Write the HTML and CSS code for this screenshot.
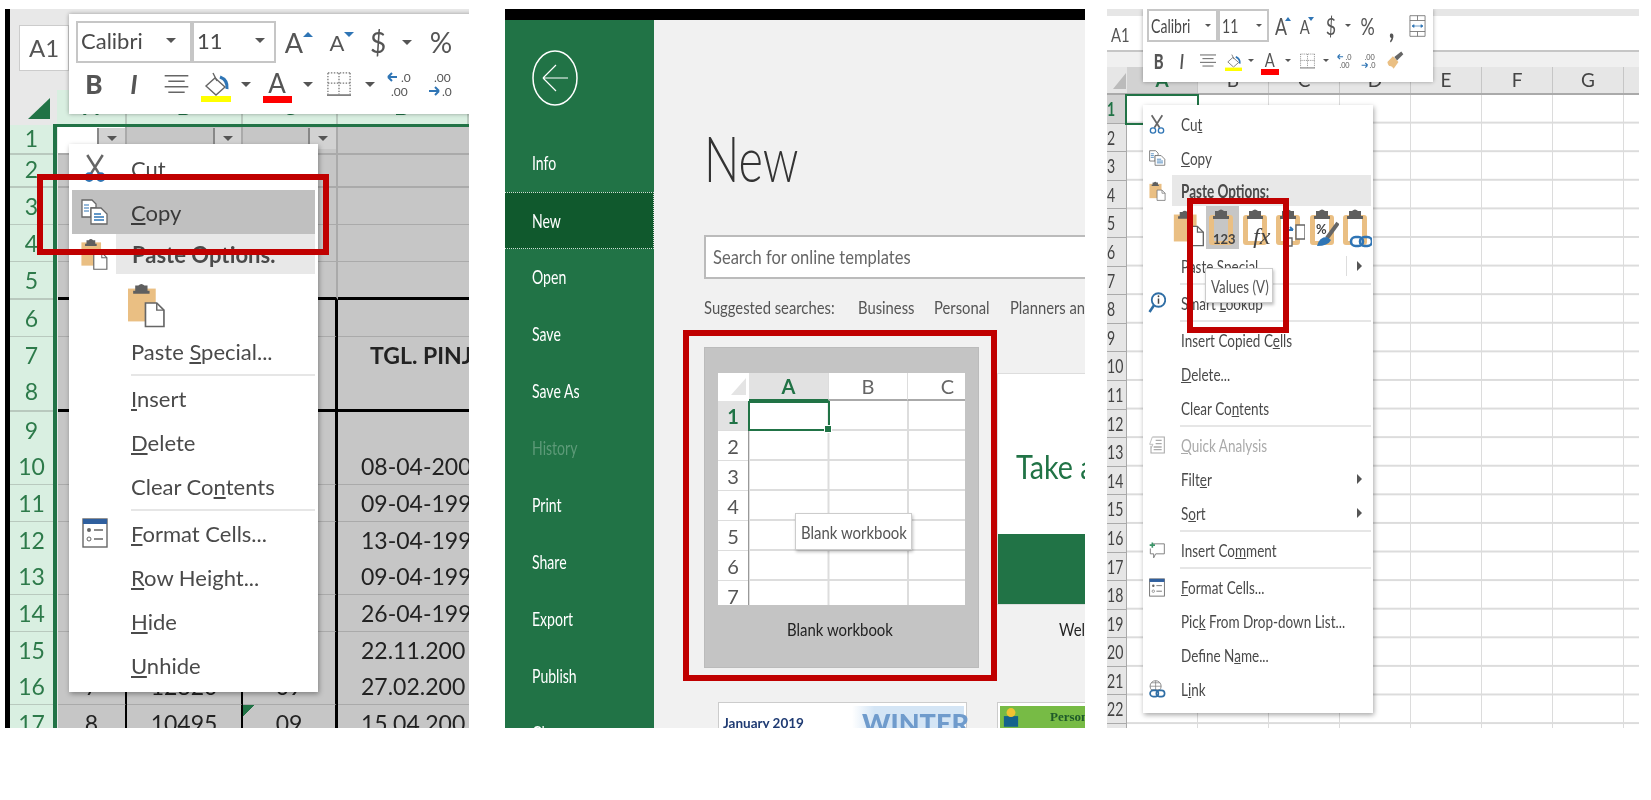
FILE: index.html
```html
<!DOCTYPE html>
<html lang="en">
<head>
    <meta charset="UTF-8">
    <title>Excel copy, new workbook, paste values</title>
    <link rel="stylesheet" href="styles.css">
</head>
<body>
    <svg class="defs" aria-hidden="true">
        <symbol id="i-cut" viewBox="0 0 24 30"><path d="M4 1l12 19M20 1L8 20" stroke="#666" stroke-width="2.6" fill="none"/><circle cx="6" cy="24" r="4" fill="none" stroke="#2f75b5" stroke-width="2"/><circle cx="18" cy="24" r="4" fill="none" stroke="#2f75b5" stroke-width="2"/></symbol>
        <symbol id="i-copy" viewBox="0 0 28 26"><path d="M1 1h10l4 4v4h-5v9H1z" fill="#fff" stroke="#666" stroke-width="1.3"/><path d="M3 6h5M3 9h5M3 12h5" stroke="#2f75b5" stroke-width="1.2"/><path d="M10 9h10l6 6v10H10z" fill="#fff" stroke="#666" stroke-width="1.3"/><path d="M13 15h7M13 18h10M13 21h10" stroke="#2f75b5" stroke-width="1.3"/></symbol>
        <symbol id="i-paste" viewBox="0 0 38 44"><path d="M1 6h27v32H1z" fill="#eabf83"/><path d="M8 8V3h3q3-3 6 0h3v5h2v3H6V8z" fill="#5f5f5f"/><path d="M18 20h11l7 7v16H18z" fill="#fff" stroke="#666" stroke-width="1.6"/><path d="M29 20v7h7" fill="none" stroke="#666" stroke-width="1.4"/></symbol>
        <symbol id="i-clip" viewBox="0 0 32 40"><path fill-rule="evenodd" d="M6 7h18q3 0 3 3v24q0 3-3 3H6q-3 0-3-3V10q0-3 3-3zM8 9v24h14V9z" fill="#eabf83"/><path d="M9 8V3h3q3-3 6 0h3v5h2v3H7V8z" fill="#5f5f5f"/></symbol>
        <symbol id="i-format" viewBox="0 0 26 30"><rect x="1" y="1" width="24" height="28" fill="#fff" stroke="#666" stroke-width="1.4"/><rect x="1" y="1" width="24" height="5" fill="#2f5f9e"/><circle cx="7" cy="12" r="2" fill="#666"/><circle cx="7" cy="21" r="2" fill="none" stroke="#666"/><path d="M12 12h9M12 21h9" stroke="#666" stroke-width="1.4"/></symbol>
        <symbol id="i-fill" viewBox="0 0 30 30"><path d="M14 6l10 9-9 8-10-9z" fill="#fff" stroke="#666" stroke-width="1.4"/><path d="M12 1l4 8" stroke="#666" stroke-width="1.4"/><path d="M19 5q8 3 7 12" fill="none" stroke="#2f75b5" stroke-width="3"/><rect y="24" width="30" height="6" fill="#ff0"/></symbol>
        <symbol id="i-border" viewBox="0 0 26 26"><path d="M1 1h24M1 12h24M1 1v23M13 1v23M25 1v23" fill="none" stroke="#777" stroke-width="1.4" stroke-dasharray="1.6 1.6"/><path d="M0 25h26" stroke="#666" stroke-width="1.6"/></symbol>
        <symbol id="i-align" viewBox="0 0 26 22"><path d="M0 2h26M4 8h18M0 14h26M4 20h18" stroke="#666" stroke-width="1.6"/></symbol>
        <symbol id="i-lookup" viewBox="0 0 24 30"><circle cx="14" cy="11" r="9" fill="#fff" stroke="#2f6ea5" stroke-width="2.4"/><path d="M8 18L2 27" stroke="#2f6ea5" stroke-width="3.4"/><path d="M14 9v7" stroke="#444" stroke-width="2"/><circle cx="14" cy="6" r="1.2" fill="#444"/></symbol>
        <symbol id="i-quick" viewBox="0 0 24 26"><path d="M5 1h18v24H3V14" fill="none" stroke="#aaa" stroke-width="1.6"/><path d="M10 6h9M10 11h9M7 16h12M7 20h12" stroke="#aaa" stroke-width="2"/><path d="M5 1L1 12h5l-3 6" fill="none" stroke="#bbb" stroke-width="1.4"/></symbol>
        <symbol id="i-comment" viewBox="0 0 24 26"><path d="M6 3h17v15H10l-3 6v-6H2V10" fill="none" stroke="#666" stroke-width="1.2"/><path d="M5 1v8M1 5h8" stroke="#3b9468" stroke-width="2.4"/></symbol>
        <symbol id="i-link" viewBox="0 0 26 26"><circle cx="11" cy="9" r="8" fill="none" stroke="#777" stroke-width="1.2"/><path d="M3 9h16M11 1v16M5 4h12M5 14h12" stroke="#777" stroke-width="1"/><rect x="3" y="15" width="12" height="9" rx="4.5" fill="#fff" stroke="#2f6ea5" stroke-width="2.4"/><rect x="12" y="15" width="12" height="9" rx="4.5" fill="none" stroke="#2f6ea5" stroke-width="2.4"/></symbol>
        <symbol id="i-brush" viewBox="0 0 26 28"><path d="M2 16l8-8 8 8-7 10q-2-4-5-4t-4-6z" fill="#eabf83"/><path d="M12 9l4 5 9-9-3-4z" fill="#666"/></symbol>
        <symbol id="i-wrap" viewBox="0 0 24 32"><path d="M1 1h22v30H1zM1 8h22M1 24h22M12 1v7M12 24v7" fill="#fff" stroke="#777" stroke-width="1.3"/><path d="M4 16h16M4 16l3-2v4zM20 16l-3-2v4z" fill="#2f75b5" stroke="#2f75b5"/></symbol>
    </svg>

    <div class="page">

        <!-- left: copy the data -->
        <section class="panel p1">
            <div class="p1-top"><div class="namebox">A1</div></div>
            <div class="p1-head">
                <div class="corner"><span class="tri"></span></div>
                <div class="colh">A</div><div class="colh">B</div><div class="colh">C</div><div class="colh">D</div>
            </div>
            <div class="r h30"><div class="rh">1</div><div class="c c1 white"><i class="fb"><i class="caret"></i></i></div><div class="c c2"><i class="fb"><i class="caret"></i></i></div><div class="c c3"><i class="fb"><i class="caret"></i></i></div><div class="c"></div></div>
            <div class="r h33"><div class="rh">2</div><div class="c"></div><div class="c"></div><div class="c"></div><div class="c"></div></div>
            <div class="r"><div class="rh">3</div><div class="c"></div><div class="c"></div><div class="c"></div><div class="c"></div></div>
            <div class="r"><div class="rh">4</div><div class="c"></div><div class="c"></div><div class="c"></div><div class="c"></div></div>
            <div class="r h38 thick"><div class="rh">5</div><div class="c"></div><div class="c"></div><div class="c"></div><div class="c"></div></div>
            <div class="r blk"><div class="rh">6</div><div class="c"></div><div class="c"></div><div class="c"></div><div class="c"></div></div>
            <div class="r blk h36"><div class="rh">7</div><div class="c"></div><div class="c"></div><div class="c"></div><div class="c title">TGL. PINJ</div></div>
            <div class="r blk h39 thick"><div class="rh">8</div><div class="c"></div><div class="c"></div><div class="c"></div><div class="c"></div></div>
            <div class="r blk h36"><div class="rh">9</div><div class="c"></div><div class="c"></div><div class="c"></div><div class="c"></div></div>
            <div class="r blk"><div class="rh">10</div><div class="c"></div><div class="c"></div><div class="c"></div><div class="c date">08-04-200</div></div>
            <div class="r blk"><div class="rh">11</div><div class="c"></div><div class="c"></div><div class="c"></div><div class="c date">09-04-199</div></div>
            <div class="r blk h36"><div class="rh">12</div><div class="c"></div><div class="c"></div><div class="c"></div><div class="c date">13-04-199</div></div>
            <div class="r blk"><div class="rh">13</div><div class="c"></div><div class="c"></div><div class="c"></div><div class="c date">09-04-199</div></div>
            <div class="r blk"><div class="rh">14</div><div class="c"></div><div class="c"></div><div class="c"></div><div class="c date">26-04-199</div></div>
            <div class="r blk h36"><div class="rh">15</div><div class="c"></div><div class="c"></div><div class="c"></div><div class="c date">22.11.200</div></div>
            <div class="r blk all"><div class="rh">16</div><div class="c mid">7</div><div class="c mid">12820</div><div class="c mid">09</div><div class="c date">27.02.200</div></div>
            <div class="r blk all"><div class="rh">17</div><div class="c mid">8</div><div class="c mid">10495</div><div class="c mid flag">09</div><div class="c date">15.04.200</div></div>

            <div class="sel-a1"></div>

            <div class="toolbar tb1">
                <div class="tb-row tb-row1">
                    <div class="sel"><span class="t">Calibri</span><i class="caret"></i></div>
                    <div class="sel"><span class="t">11</span><i class="caret"></i></div>
                    <div class="tb-i fa">A<i class="up"></i></div>
                    <div class="tb-i fa fa-s">A<i class="dn"></i></div>
                    <div class="tb-i sym">$</div>
                    <div class="tb-i"><i class="caret"></i></div>
                    <div class="tb-i sym">%</div>
                </div>
                <div class="tb-row tb-row2">
                    <div class="tb-i bold">B</div>
                    <div class="tb-i ital">I</div>
                    <div class="tb-i"><svg class="ic-align"><use href="#i-align"/></svg></div>
                    <div class="tb-i"><svg class="ic-fill"><use href="#i-fill"/></svg></div>
                    <div class="tb-i"><i class="caret"></i></div>
                    <div class="tb-i"><span class="fc">A</span></div>
                    <div class="tb-i"><i class="caret"></i></div>
                    <div class="tb-i"><svg class="ic-border"><use href="#i-border"/></svg></div>
                    <div class="tb-i"><i class="caret"></i></div>
                    <div class="tb-i"><svg class="ic-dec" viewBox="0 0 28 28"><path d="M1 7h9M1 7l4-4M1 7l4 4" fill="none" stroke="#2f75b5" stroke-width="2"/><text x="14" y="12" class="dec-t">.0</text><text x="4" y="26" class="dec-t">.00</text></svg></div>
                    <div class="tb-i"><svg class="ic-dec" viewBox="0 0 28 28"><text x="6" y="12" class="dec-t">.00</text><path d="M1 21h10M11 21l-4-4M11 21l-4 4" fill="none" stroke="#2f75b5" stroke-width="2"/><text x="14" y="26" class="dec-t">.0</text></svg></div>
                </div>
            </div>

            <div class="menu m1">
                <div class="mi"><span class="mi-ic"><svg class="ic-cut"><use href="#i-cut"/></svg></span><span class="lbl">Cut</span></div>
                <div class="mi on"><span class="mi-ic"><svg class="ic-copy"><use href="#i-copy"/></svg></span><span class="lbl"><u>C</u>opy</span></div>
                <div class="mi mi-head"><span class="mi-ic"><svg class="ic-paste"><use href="#i-paste"/></svg></span><span class="band"><span class="lbl">Paste Options:</span></span></div>
                <div class="paste-row"><svg class="ic-paste-big"><use href="#i-paste"/></svg></div>
                <div class="mi"><span class="mi-ic"></span><span class="lbl">Paste <u>S</u>pecial...</span></div>
                <div class="sep"></div>
                <div class="mi"><span class="mi-ic"></span><span class="lbl"><u>I</u>nsert</span></div>
                <div class="mi"><span class="mi-ic"></span><span class="lbl"><u>D</u>elete</span></div>
                <div class="mi"><span class="mi-ic"></span><span class="lbl">Clear Co<u>n</u>tents</span></div>
                <div class="sep"></div>
                <div class="mi"><span class="mi-ic"><svg class="ic-format"><use href="#i-format"/></svg></span><span class="lbl"><u>F</u>ormat Cells...</span></div>
                <div class="mi"><span class="mi-ic"></span><span class="lbl"><u>R</u>ow Height...</span></div>
                <div class="mi"><span class="mi-ic"></span><span class="lbl"><u>H</u>ide</span></div>
                <div class="mi"><span class="mi-ic"></span><span class="lbl"><u>U</u>nhide</span></div>
            </div>
            <div class="redbox red1"></div>
        </section>

        <!-- middle: new workbook -->
        <section class="panel p2">
            <aside class="side">
                <svg class="back" viewBox="0 0 46 58"><ellipse cx="23" cy="29" rx="22" ry="27" fill="none" stroke="#fff" stroke-width="1.5"/><path d="M11 29h25M11 29l13-13M11 29l13 13" fill="none" stroke="#fff" stroke-width="1.2"/></svg>
                <div class="side-i"><span class="sq">Info</span></div>
                <div class="side-i cur"><span class="sq">New</span></div>
                <div class="side-i"><span class="sq">Open</span></div>
                <div class="side-i"><span class="sq">Save</span></div>
                <div class="side-i"><span class="sq">Save As</span></div>
                <div class="side-i off"><span class="sq">History</span></div>
                <div class="side-i"><span class="sq">Print</span></div>
                <div class="side-i"><span class="sq">Share</span></div>
                <div class="side-i"><span class="sq">Export</span></div>
                <div class="side-i"><span class="sq">Publish</span></div>
                <div class="side-i"><span class="sq">Close</span></div>
            </aside>
            <div class="main">
                <h1 class="new-title">New</h1>
                <div class="search"><span class="sq">Search for online templates</span></div>
                <div class="suggest">
                    <span class="sg sg1"><span class="sq">Suggested searches:</span></span>
                    <span class="sg sg2"><span class="sq">Business</span></span>
                    <span class="sg sg2"><span class="sq">Personal</span></span>
                    <span class="sg sg3"><span class="sq">Planners and Trackers</span></span>
                </div>
                <div class="cards">
                    <div class="card-blank">
                        <div class="thumb">
                            <div class="th-head">
                                <div class="th-corner"><span class="tri-g"></span></div>
                                <div class="th-col cur">A</div>
                                <div class="th-col">B</div>
                                <div class="th-col last">C</div>
                            </div>
                            <div class="th-body">
                                <div class="th-rows">
                                    <div class="th-r cur">1</div>
                                    <div class="th-r">2</div>
                                    <div class="th-r">3</div>
                                    <div class="th-r">4</div>
                                    <div class="th-r">5</div>
                                    <div class="th-r">6</div>
                                    <div class="th-r">7</div>
                                </div>
                                <div class="th-grid"><div class="th-sel"><i class="th-handle"></i></div></div>
                            </div>
                            <div class="tip tip-blank"><span class="sq">Blank workbook</span></div>
                        </div>
                        <div class="card-label"><span class="sq">Blank workbook</span></div>
                    </div>
                    <div class="card-tour">
                        <div class="tour">
                            <div class="tour-top"><span class="sq">Take a tour</span></div>
                            <div class="tour-band"></div>
                        </div>
                        <div class="card-label wel"><span class="sq">Welcome to Excel</span></div>
                    </div>
                </div>
                <div class="lower">
                    <div class="low-a"><span class="jan">January 2019</span><span class="winter">WINTER</span></div>
                    <div class="low-b">
                        <div class="low-bar">
                            <svg class="ic-coin" viewBox="0 0 18 22"><rect x="1" y="10" width="16" height="12" fill="#14628c"/><circle cx="9" cy="6" r="5" fill="#f1c232"/></svg>
                            <span class="pers">Personal</span>
                        </div>
                    </div>
                </div>
            </div>
            <div class="redbox red2"></div>
        </section>

        <!-- right: paste values -->
        <section class="panel p3">
            <div class="p3-strip"></div>
            <div class="p3-fbar"><span class="sq">A1</span></div>
            <div class="p3-gap"></div>
            <div class="p3-head">
                <div class="p3-corner"><span class="tri-g2"></span></div>
                <div class="p3-col cur">A</div>
                <div class="p3-col">B</div>
                <div class="p3-col">C</div>
                <div class="p3-col">D</div>
                <div class="p3-col">E</div>
                <div class="p3-col">F</div>
                <div class="p3-col">G</div>
            </div>
            <div class="p3-body">
                <div class="p3-rows">
                    <div class="p3-r cur"><span class="sq">1</span></div>
                    <div class="p3-r"><span class="sq">2</span></div>
                    <div class="p3-r"><span class="sq">3</span></div>
                    <div class="p3-r"><span class="sq">4</span></div>
                    <div class="p3-r"><span class="sq">5</span></div>
                    <div class="p3-r"><span class="sq">6</span></div>
                    <div class="p3-r"><span class="sq">7</span></div>
                    <div class="p3-r"><span class="sq">8</span></div>
                    <div class="p3-r"><span class="sq">9</span></div>
                    <div class="p3-r"><span class="sq">10</span></div>
                    <div class="p3-r"><span class="sq">11</span></div>
                    <div class="p3-r"><span class="sq">12</span></div>
                    <div class="p3-r"><span class="sq">13</span></div>
                    <div class="p3-r"><span class="sq">14</span></div>
                    <div class="p3-r"><span class="sq">15</span></div>
                    <div class="p3-r"><span class="sq">16</span></div>
                    <div class="p3-r"><span class="sq">17</span></div>
                    <div class="p3-r"><span class="sq">18</span></div>
                    <div class="p3-r"><span class="sq">19</span></div>
                    <div class="p3-r"><span class="sq">20</span></div>
                    <div class="p3-r"><span class="sq">21</span></div>
                    <div class="p3-r"><span class="sq">22</span></div>
                </div>
                <div class="p3-grid"></div>
            </div>

            <div class="sel-p3"></div>

            <div class="toolbar tb3">
                <div class="tb-row tb-row1">
                    <div class="sel"><span class="t">Calibri</span><i class="caret"></i></div>
                    <div class="sel"><span class="t">11</span><i class="caret"></i></div>
                    <div class="tb-i fa"><span class="sq-c">A</span><i class="up"></i></div>
                    <div class="tb-i fa fa-s"><span class="sq-c">A</span><i class="dn"></i></div>
                    <div class="tb-i sym"><span class="sq-c">$</span></div>
                    <div class="tb-i"><i class="caret"></i></div>
                    <div class="tb-i sym"><span class="sq-c">%</span></div>
                    <div class="tb-i sym bold comma"><span class="sq-c">,</span></div>
                    <div class="tb-i"><svg class="ic-wrap"><use href="#i-wrap"/></svg></div>
                </div>
                <div class="tb-row tb-row2">
                    <div class="tb-i bold"><span class="sq-c">B</span></div>
                    <div class="tb-i ital"><span class="sq-c">I</span></div>
                    <div class="tb-i"><svg class="ic-align"><use href="#i-align"/></svg></div>
                    <div class="tb-i"><svg class="ic-fill"><use href="#i-fill"/></svg></div>
                    <div class="tb-i"><i class="caret"></i></div>
                    <div class="tb-i"><span class="fc"><span class="sq-c">A</span></span></div>
                    <div class="tb-i"><i class="caret"></i></div>
                    <div class="tb-i"><svg class="ic-border"><use href="#i-border"/></svg></div>
                    <div class="tb-i"><i class="caret"></i></div>
                    <div class="tb-i"><svg class="ic-dec" viewBox="0 0 28 28"><path d="M1 7h9M1 7l4-4M1 7l4 4" fill="none" stroke="#2f75b5" stroke-width="2"/><text x="14" y="12" class="dec-t">.0</text><text x="4" y="26" class="dec-t">.00</text></svg></div>
                    <div class="tb-i"><svg class="ic-dec" viewBox="0 0 28 28"><text x="6" y="12" class="dec-t">.00</text><path d="M1 21h10M11 21l-4-4M11 21l-4 4" fill="none" stroke="#2f75b5" stroke-width="2"/><text x="14" y="26" class="dec-t">.0</text></svg></div>
                    <div class="tb-i"><svg class="ic-brush"><use href="#i-brush"/></svg></div>
                </div>
            </div>

            <div class="menu m3">
                <div class="mi"><span class="mi-ic"><svg class="ic-cut"><use href="#i-cut"/></svg></span><span class="lbl">Cu<u>t</u></span></div>
                <div class="mi"><span class="mi-ic"><svg class="ic-copy"><use href="#i-copy"/></svg></span><span class="lbl"><u>C</u>opy</span></div>
                <div class="mi mi-head"><span class="mi-ic"><svg class="ic-paste"><use href="#i-paste"/></svg></span><span class="band"><span class="lbl">Paste Options:</span></span></div>
                <div class="paste-row">
                    <div class="pb"><svg class="pb-ic" viewBox="0 0 32 40"><use href="#i-paste" width="32" height="40"/></svg></div>
                    <div class="pb on"><svg class="pb-ic" viewBox="0 0 32 40"><use href="#i-clip" width="32" height="40"/><text x="7" y="36" class="pb-t">123</text></svg></div>
                    <div class="pb"><svg class="pb-ic" viewBox="0 0 32 40"><use href="#i-clip" width="32" height="40"/><text x="13" y="36" class="pb-fx">fx</text></svg></div>
                    <div class="pb"><svg class="pb-ic" viewBox="0 0 32 40"><use href="#i-clip" width="32" height="40"/><path d="M23 17h9v14h-9zM12 30h7v8h-7z" fill="#fff" stroke="#666" stroke-width="1.4"/><path d="M12 22h8M20 22l-3-3M14 27l-3 3" fill="none" stroke="#2f75b5" stroke-width="2"/></svg></div>
                    <div class="pb"><svg class="pb-ic" viewBox="0 0 32 40"><use href="#i-clip" width="32" height="40"/><text x="9" y="26" class="pb-t pb-pc">%</text><path d="M31 15L20 30" stroke="#666" stroke-width="4"/><path d="M10 38q2-9 10-9l4 3q-3 6-14 6z" fill="#2f75b5"/></svg></div>
                    <div class="pb"><svg class="pb-ic" viewBox="0 0 32 40"><use href="#i-clip" width="32" height="40"/><rect x="11" y="29" width="12" height="9" rx="4.5" fill="#fff" stroke="#2f75b5" stroke-width="2.6"/><rect x="20" y="29" width="12" height="9" rx="4.5" fill="none" stroke="#2f75b5" stroke-width="2.6"/></svg></div>
                </div>
                <div class="mi"><span class="mi-ic"></span><span class="lbl">Paste Special...</span><i class="vsep"></i><i class="arrow"></i></div>
                <div class="sep"></div>
                <div class="mi"><span class="mi-ic"><svg class="ic-lookup"><use href="#i-lookup"/></svg></span><span class="lbl">Smart <u>L</u>ookup</span></div>
                <div class="sep"></div>
                <div class="mi"><span class="mi-ic"></span><span class="lbl">Insert Copied C<u>e</u>lls</span></div>
                <div class="mi"><span class="mi-ic"></span><span class="lbl"><u>D</u>elete...</span></div>
                <div class="mi"><span class="mi-ic"></span><span class="lbl">Clear Co<u>n</u>tents</span></div>
                <div class="sep"></div>
                <div class="mi dim"><span class="mi-ic"><svg class="ic-quick"><use href="#i-quick"/></svg></span><span class="lbl"><u>Q</u>uick Analysis</span></div>
                <div class="mi"><span class="mi-ic"></span><span class="lbl">Filt<u>e</u>r</span><i class="arrow"></i></div>
                <div class="mi"><span class="mi-ic"></span><span class="lbl">S<u>o</u>rt</span><i class="arrow"></i></div>
                <div class="sep"></div>
                <div class="mi"><span class="mi-ic"><svg class="ic-comment"><use href="#i-comment"/></svg></span><span class="lbl">Insert Co<u>m</u>ment</span></div>
                <div class="sep"></div>
                <div class="mi"><span class="mi-ic"><svg class="ic-format"><use href="#i-format"/></svg></span><span class="lbl"><u>F</u>ormat Cells...</span></div>
                <div class="mi"><span class="mi-ic"></span><span class="lbl">Pic<u>k</u> From Drop-down List...</span></div>
                <div class="mi"><span class="mi-ic"></span><span class="lbl">Define N<u>a</u>me...</span></div>
                <div class="mi"><span class="mi-ic"><svg class="ic-link"><use href="#i-link"/></svg></span><span class="lbl">L<u>i</u>nk</span></div>
            </div>
            <div class="tip tip-values"><span class="sq">Values (V)</span></div>
            <div class="redbox red3"></div>
        </section>
    </div>
</body>
</html>
```

FILE: styles.css
```css
body {
    margin: 0;
    background-color: #fff;
    color: #4a4a4a;
    font-family: Lato, 'Open Sans', sans-serif;
}

.defs {
    position: absolute;
    width: 0;
    height: 0;
}

.page {
    display: flex;
    padding: 9px 0 0 5px;
    height: 791px;
    overflow: hidden;
}

.panel {
    position: relative;
    height: 719px;
    overflow: hidden;
    flex: none;
    filter: blur(0.5px);
}

svg {
    display: block;
    flex: none;
}

/* squeezed text: the source picture was shrunk horizontally */
.sq {
    display: inline-block;
    white-space: nowrap;
    transform: scaleX(0.74);
    transform-origin: 0 50%;
}

.sq-c {
    display: inline-block;
    transform: scaleX(0.74);
}

.caret {
    display: inline-block;
    width: 0;
    height: 0;
    border-left: 5px solid transparent;
    border-right: 5px solid transparent;
    border-top: 5px solid #555;
}

.redbox {
    position: absolute;
    border: 6px solid #c00000;
    box-sizing: border-box;
}

.tip {
    position: absolute;
    box-sizing: border-box;
    background-color: #fff;
    border: 1px solid #ccc;
    box-shadow: 1px 2px 3px rgba(0, 0, 0, 0.25);
    display: flex;
    align-items: center;
    color: #555;
}

/* panel 1 */
.p1 {
    width: 459px;
    margin-right: 36px;
    border-left: 5px solid #000;
    background-color: #e8e8e8;
}

.p1-top {
    height: 81px;
    padding: 16px 0 0 9px;
    box-sizing: border-box;
}

.namebox {
    width: 50px;
    height: 46px;
    box-sizing: border-box;
    background-color: #fff;
    border: 1px solid #ccc;
    font-size: 24px;
    line-height: 44px;
    text-align: center;
    color: #555;
}

.p1-head {
    display: grid;
    grid-template-columns: 47px 70px 116px 95px 1fr;
    height: 35px;
    font-size: 22px;
}

.corner {
    display: flex;
    justify-content: flex-end;
    padding: 8px 7px 0 0;
}

.tri {
    width: 0;
    height: 0;
    border-left: 22px solid transparent;
    border-bottom: 21px solid #217346;
}

.colh {
    background-color: #d9efe1;
    border-right: 2px solid #b9c9be;
    color: #217346;
    text-align: center;
    line-height: 34px;
    font-weight: 700;
}

.r {
    display: grid;
    grid-template-columns: 43px 5px 69px 116px 95px 1fr;
    height: 37px;
    font-size: 23px;
    color: #222;
}

.h30 { height: 30px; }
.h33 { height: 33px; }
.h36 { height: 36px; }
.h38 { height: 38px; }
.h39 { height: 39px; }

.rh {
    grid-column: 1;
    background-color: #d9efe1;
    border-bottom: 2px solid #b9c9be;
    box-sizing: border-box;
    color: #2d7a4a;
    text-align: center;
    font-size: 23px;
    line-height: 36px;
}

.h30 .rh { line-height: 26px; }
.h33 .rh { line-height: 29px; }

.c {
    box-sizing: border-box;
    background-color: #c6c6c6;
    border-bottom: 2px solid #aaa;
    border-right: 2px solid #aaa;
    white-space: nowrap;
    overflow: hidden;
    line-height: 36px;
}

.c:nth-child(5) { border-right: 0; }

.rh + .c { grid-column: 3; }

.white {
    background-color: #fff;
}

.c1, .c2, .c3 {
    display: flex;
    justify-content: flex-end;
}

.fb {
    display: flex;
    align-items: center;
    justify-content: center;
    width: 28px;
    height: 21px;
    margin-top: 3px;
    background-color: #d2d2d2;
    border-left: 2px solid #888;
    box-sizing: border-box;
}

.thick .c { border-bottom: 3px solid #000; }
.blk .c:nth-child(4) { border-right-color: #000; border-right-width: 3px; }
.all .c:nth-child(2), .all .c:nth-child(3) { border-right-color: #000; }

.date { padding-left: 23px; }
.title { padding-left: 32px; font-weight: 700; font-size: 23px; }
.mid { text-align: center; }

.flag {
    background-image: linear-gradient(135deg, #217346 50%, transparent 50%);
    background-size: 12px 12px;
    background-repeat: no-repeat;
}

.sel-a1 {
    position: absolute;
    left: 43px;
    top: 115px;
    width: 500px;
    height: 700px;
    box-sizing: border-box;
    border: 4px solid #217346;
    border-width: 3px 0 0 4px;
}

/* floating mini toolbars */
.toolbar {
    position: absolute;
    box-sizing: border-box;
    background-color: #fff;
    box-shadow: 0 0 4px rgba(0, 0, 0, 0.35);
}

.tb-row {
    display: grid;
    align-items: center;
}

.tb-i {
    display: flex;
    align-items: center;
    justify-content: center;
    color: #555;
}

.sel {
    display: flex;
    align-items: center;
    justify-content: space-between;
    box-sizing: border-box;
    height: 100%;
    border: 2px solid #c6c6c6;
}

.up, .dn {
    display: inline-block;
    width: 0;
    height: 0;
    border-left: 5px solid transparent;
    border-right: 5px solid transparent;
    margin-bottom: 16px;
}
.up { border-bottom: 5px solid #2f75b5; }
.dn { border-top: 5px solid #2f75b5; }

.bold { font-weight: 900; }
.ital { font-style: italic; font-weight: 700; }
.fc { display: block; text-align: center; line-height: 1; color: #555; }
.dec-t { font-size: 12px; fill: #555; font-family: Lato, sans-serif; }

.tb1 {
    left: 59px;
    top: 5px;
    width: 420px;
    height: 100px;
    padding: 7px 0 0 7px;
}

.tb1 .tb-row1 {
    height: 42px;
    grid-template-columns: 116px 84px 46px 40px 32px 26px 42px;
}

.tb1 .tb-row2 {
    height: 42px;
    grid-template-columns: 36px 44px 40px 40px 20px 42px 20px 42px 20px 42px 40px;
}

.tb1 .sel { padding: 0 14px 4px 3px; font-size: 22px; }
.tb1 .sel + .sel { padding-right: 9px; padding-left: 3px; }
.tb1 .caret { border-width: 5px 5px 0; }
.tb1 .fa { font-size: 27px; }
.tb1 .fa-s { font-size: 22px; }
.tb1 .sym { font-size: 28px; }
.tb1 .bold, .tb1 .ital { font-size: 26px; }
.tb1 .ic-align { width: 25px; height: 20px; }
.tb1 .ic-fill { width: 30px; height: 30px; margin-top: 6px; }
.tb1 .fc { width: 29px; font-size: 26px; border-bottom: 7px solid #f00; margin-top: 4px; }
.tb1 .ic-border { width: 24px; height: 24px; }
.tb1 .ic-dec { width: 28px; height: 28px; }

.tb3 {
    left: 36px;
    top: 0;
    width: 290px;
    height: 73px;
    padding: 0 0 0 4px;
}

.tb3 .tb-row1 {
    height: 33px;
    grid-template-columns: 71px 51px 26px 22px 28px 6px 34px 14px 36px;
}

.tb3 .tb-row2 {
    height: 33px;
    margin-top: 2px;
    grid-template-columns: 24px 22px 30px 20px 16px 22px 14px 24px 14px 24px 24px 28px;
}

.tb3 .t {
    display: inline-block;
    transform: scaleX(0.74);
    transform-origin: 0 50%;
}

.tb3 .sel { padding: 0 5px 0 2px; font-size: 19px; }
.tb3 .caret { border-width: 3px 3px 0; }
.tb3 .fa { font-size: 24px; }
.tb3 .fa-s { font-size: 20px; }
.tb3 .up, .tb3 .dn { border-width: 4px 3px; margin-left: -4px; margin-bottom: 14px; }
.tb3 .up { border-top: 0; }
.tb3 .dn { border-bottom: 0; }
.tb3 .sym { font-size: 24px; }
.tb3 .bold, .tb3 .ital { font-size: 20px; }
.tb3 .comma { font-size: 30px; line-height: 20px; }
.tb3 .ic-align { width: 16px; height: 15px; }
.tb3 .ic-fill { width: 17px; height: 23px; margin-top: 3px; }
.tb3 .fc { width: 18px; font-size: 20px; border-bottom: 6px solid #f00; margin-top: 3px; }
.tb3 .ic-border { width: 15px; height: 20px; }
.tb3 .ic-dec { width: 17px; height: 22px; }
.tb3 .ic-brush { width: 18px; height: 21px; }
.tb3 .ic-wrap { width: 17px; height: 22px; }

/* context menus */
.menu {
    position: absolute;
    box-sizing: border-box;
    background-color: #fff;
    box-shadow: 1px 2px 5px rgba(0, 0, 0, 0.35);
    color: #4a4a4a;
}

.mi {
    display: flex;
    align-items: center;
}

.mi-ic {
    display: flex;
    align-items: center;
    justify-content: center;
    flex: none;
    box-sizing: border-box;
}

.lbl {
    display: inline-block;
    white-space: nowrap;
    transform-origin: 0 50%;
}

.band {
    flex: 1;
    align-self: stretch;
    display: flex;
    align-items: center;
    background-color: #e8e8e8;
    font-weight: 700;
}

.m1 {
    left: 59px;
    top: 135px;
    width: 249px;
    height: 548px;
    padding: 2px 3px 0;
    font-size: 22px;
}

.m1 .mi { height: 44px; }
.m1 .mi-ic { width: 59px; padding-right: 14px; }
.m1 .on { background-color: #c0c0c0; color: #3a3a3a; }
.m1 .mi-head { height: 40px; }
.m1 .mi-head .mi-ic { width: 44px; justify-content: flex-start; padding: 0 0 0 8px; }
.m1 .band { padding-left: 16px; }
.m1 .paste-row { height: 55px; padding: 8px 0 0 55px; box-sizing: border-box; }
.m1 .sep { height: 2px; margin-left: 59px; margin-top: 1px; background-color: #e6e6e6; }

.m1 .ic-cut { width: 26px; height: 29px; }
.m1 .ic-copy { width: 28px; height: 26px; }
.m1 .ic-paste { width: 29px; height: 32px; }
.ic-paste-big { width: 39px; height: 46px; }
.m1 .ic-format { width: 26px; height: 30px; }

.m3 {
    left: 36px;
    top: 96px;
    width: 230px;
    height: 608px;
    padding: 2px 2px 0;
    font-size: 18px;
}

.m3 .lbl { transform: scaleX(0.75); }
.m3 .mi { height: 34px; }
.m3 .mi-ic { width: 36px; padding-right: 12px; }
.m3 .mi-head { height: 31px; }
.m3 .mi-head .mi-ic { width: 27px; justify-content: flex-start; padding: 0 0 0 4px; }
.m3 .band { padding-left: 9px; }
.m3 .paste-row { display: flex; height: 43px; padding-left: 27px; }
.m3 .sep { height: 2px; margin: 0 0 1px 35px; background-color: #e6e6e6; }
.m3 .dim { color: #aaa; }
.m3 .ic-cut { width: 16px; height: 21px; }
.m3 .ic-copy { width: 17px; height: 20px; }
.m3 .ic-paste { width: 17px; height: 24px; }
.m3 .ic-format { width: 16px; height: 23px; }
.ic-lookup { width: 18px; height: 24px; }
.ic-quick { width: 16px; height: 22px; }
.ic-comment { width: 16px; height: 21px; }
.ic-link { width: 18px; height: 24px; }

.pb {
    width: 33.5px;
    height: 43px;
    flex: none;
    display: flex;
    align-items: center;
    justify-content: center;
}

.pb.on { background-color: #c6c6c6; }
.pb-ic { width: 32px; height: 40px; }
.pb-t { font-size: 13px; font-weight: 700; fill: #444; font-family: Lato, sans-serif; }
.pb-fx { font-size: 24px; fill: #444; font-style: italic; font-family: 'Liberation Serif', serif; }
.pb-pc { font-size: 13px; }

.vsep {
    width: 1px;
    height: 20px;
    background-color: #ddd;
    margin-left: auto;
    margin-right: 10px;
}

.arrow {
    width: 0;
    height: 0;
    border-top: 5px solid transparent;
    border-bottom: 5px solid transparent;
    border-left: 5px solid #555;
    margin-right: 9px;
}

.lbl + .arrow { margin-left: auto; }

/* panel 2 */
.p2 {
    display: flex;
    width: 580px;
    margin-right: 22px;
    border-top: 11px solid #000;
    box-sizing: border-box;
}

.side {
    width: 149px;
    flex: none;
    background-color: #217346;
    color: #fff;
    font-size: 19px;
}

.back {
    width: 46px;
    height: 58px;
    margin: 29px 0 28px 27px;
}

.side-i {
    height: 57px;
    box-sizing: border-box;
    padding-left: 27px;
    line-height: 56px;
}

.side-i.cur {
    background-color: #10592d;
    border-top: 1px dotted #cfe0d5;
    border-bottom: 1px dotted #cfe0d5;
    border-right: 1px dotted #cfe0d5;
    line-height: 55px;
}

.side-i.off { color: #5d9a78; }

.main {
    flex: 1;
    min-width: 0;
    overflow: hidden;
    background-color: #f1f1f1;
    padding-left: 50px;
}

.main .sq { transform: scaleX(0.87); }
.main .card-label .sq, .main .tip-blank .sq { transform: scaleX(0.83); }

.new-title {
    margin: 0;
    padding-top: 102px;
    height: 113px;
    font-size: 64px;
    font-weight: 300;
    color: #333;
    line-height: 72px;
    transform: scaleX(0.73);
    transform-origin: 0 0;
}

.search {
    width: 500px;
    height: 44px;
    box-sizing: border-box;
    background-color: #fff;
    border: 2px solid #bbb;
    padding-left: 7px;
    font-size: 19px;
    line-height: 40px;
    color: #666;
}

.suggest {
    display: flex;
    height: 26px;
    margin-top: 16px;
    font-size: 17px;
    line-height: 26px;
    color: #555;
    white-space: nowrap;
}

.sg1 { width: 154px; flex: none; }
.sg2 { width: 76px; flex: none; }

.cards {
    display: flex;
    gap: 18px;
    margin-top: 26px;
    width: 620px;
}

.card-blank {
    flex: none;
    width: 275px;
    height: 321px;
    box-sizing: border-box;
    padding: 25px 13px 0;
    background-color: #c4c4c4;
    border: 1px solid #bbb;
}

.thumb {
    position: relative;
    height: 232px;
    width: 247px;
    overflow: hidden;
    background-color: #fff;
}

.th-head {
    display: grid;
    grid-template-columns: 31px 80px 79px 57px;
    height: 28px;
    font-size: 20px;
    line-height: 26px;
    text-align: center;
    color: #666;
}

.th-corner {
    display: flex;
    justify-content: flex-end;
    padding: 5px 3px 0 0;
}

.tri-g {
    width: 0;
    height: 0;
    border-left: 15px solid transparent;
    border-bottom: 17px solid #e4e4e4;
}

.th-col {
    border-right: 1px solid #ddd;
    border-bottom: 2px solid #aaa;
    box-sizing: border-box;
}

.th-col.cur {
    background-color: #e2e2e2;
    color: #217346;
    font-weight: 700;
    border-bottom-color: #217346;
}

.th-col.last { border-right: 0; padding-left: 22px; }

.th-body {
    display: flex;
}

.th-rows {
    width: 31px;
    flex: none;
    border-right: 1px solid #999;
    box-sizing: border-box;
}

.th-r {
    height: 30px;
    box-sizing: border-box;
    border-bottom: 1px solid #ddd;
    text-align: center;
    font-size: 20px;
    line-height: 30px;
    color: #555;
}

.th-r.cur {
    background-color: #e2e2e2;
    color: #217346;
    font-weight: 700;
}

.th-grid {
    position: relative;
    flex: 1;
    background-image:
        linear-gradient(to right, #ddd 2px, transparent 2px),
        linear-gradient(to bottom, transparent 28px, #ddd 28px);
    background-size: 79.5px 30px;
    background-position: -1px 0, 0 0;
}

.th-sel {
    position: absolute;
    left: -1px;
    top: 0;
    width: 82px;
    height: 30px;
    box-sizing: border-box;
    border: 2px solid #217346;
}

.th-handle {
    position: absolute;
    right: -4px;
    bottom: -4px;
    width: 6px;
    height: 6px;
    background-color: #217346;
    border: 1px solid #fff;
}

.tip-blank {
    left: 77px;
    top: 140px;
    width: 117px;
    height: 37px;
    padding-left: 5px;
    font-size: 18px;
}

.card-label {
    height: 62px;
    line-height: 48px;
    padding-left: 69px;
    font-size: 18px;
    color: #222;
    white-space: nowrap;
}

.card-tour {
    width: 320px;
    padding-top: 26px;
}

.tour {
    height: 232px;
    background-color: #fff;
    border: 1px solid #ddd;
    box-sizing: border-box;
}

.tour-top {
    height: 160px;
    padding: 72px 0 0 18px;
    box-sizing: border-box;
    color: #217346;
    font-size: 33px;
    white-space: nowrap;
}

.tour-band {
    height: 70px;
    background-color: #217346;
}

.card-label.wel { padding-left: 62px; }

.lower {
    display: flex;
    gap: 30px;
    margin-top: 34px;
    padding-left: 14px;
    width: 620px;
}

.low-a {
    flex: none;
    display: flex;
    justify-content: space-between;
    width: 249px;
    height: 60px;
    box-sizing: border-box;
    background-color: #fff;
    border: 1px solid #ccc;
    padding: 3px 2px 0 4px;
    white-space: nowrap;
}

.jan {
    font-size: 13.5px;
    font-weight: 700;
    color: #1f3b73;
    padding-top: 9px;
}

.winter {
    width: 112px;
    height: 40px;
    font-size: 27px;
    font-weight: 900;
    padding-left: 10px;
    box-sizing: border-box;
    color: #6f9bcc;
    background-image: linear-gradient(to right, #fff, #d4e5f5 20%);
}

.low-b {
    flex: none;
    width: 300px;
    height: 60px;
    box-sizing: border-box;
    background-color: #fff;
    border: 1px solid #ccc;
    padding: 3px 2px;
}

.low-bar {
    display: flex;
    align-items: center;
    gap: 31px;
    height: 22px;
    padding-left: 3px;
    background-color: #77bb45;
}

.ic-coin {
    width: 16px;
    height: 22px;
}

.pers {
    font-family: 'Liberation Serif', serif;
    font-size: 13px;
    font-weight: 700;
    color: #1f5a2a;
}

.red1 { left: 27px; top: 165px; width: 292px; height: 81px; }
.red2 { left: 178px; top: 310px; width: 314px; height: 351px; }

/* panel 3 */
.p3 {
    width: 532px;
    background-color: #fff;
}

.p3-strip {
    height: 7px;
    background-color: #e6e6e6;
}

.p3-fbar {
    height: 36px;
    box-sizing: border-box;
    padding-left: 4px;
    border-bottom: 2px solid #c6c6c6;
    font-size: 20px;
    line-height: 36px;
    color: #555;
}

.p3-gap {
    height: 15px;
    background-color: #f0f0f0;
}

.p3-head {
    display: grid;
    grid-template-columns: 20px repeat(7, 71px);
    height: 28px;
    background-color: #e6e6e6;
    border-bottom: 2px solid #aaa;
    box-sizing: border-box;
    font-size: 19px;
    line-height: 26px;
    text-align: center;
    color: #444;
}

.p3-corner { display: flex; justify-content: flex-end; padding: 6px 1px 0 0; }

.tri-g2 {
    width: 0;
    height: 0;
    border-left: 13px solid transparent;
    border-bottom: 16px solid #bbb;
}

.p3-col { border-right: 1px solid #c6c6c6; }
.p3-col.cur { background-color: #d2d2d2; color: #217346; font-weight: 700; }

.p3-body {
    display: flex;
}

.p3-rows {
    width: 20px;
    flex: none;
    background-color: #e6e6e6;
    border-right: 1px solid #aaa;
    box-sizing: border-box;
}

.p3-r {
    height: 28.6px;
    box-sizing: border-box;
    border-bottom: 1px solid #aaa;
    font-size: 19px;
    line-height: 28px;
    color: #444;
    overflow: hidden;
}

.p3-r.cur { background-color: #d2d2d2; color: #217346; font-weight: 700; }

.p3-grid {
    flex: 1;
    height: 640px;
    background-image:
        linear-gradient(to right, transparent 69.5px, #dcdcdc 69.5px),
        linear-gradient(to bottom, transparent 27px, #dcdcdc 27px);
    background-size: 71px 28.6px;
}

.sel-p3 {
    position: absolute;
    left: 18px;
    top: 85px;
    width: 74px;
    height: 31px;
    box-sizing: border-box;
    border: 2.5px solid #217346;
}

.tip-values {
    left: 98px;
    top: 259px;
    width: 68px;
    height: 35px;
    padding-left: 5px;
    font-size: 18px;
}

.red3 { left: 80px; top: 189px; width: 102px; height: 135px; }
```
